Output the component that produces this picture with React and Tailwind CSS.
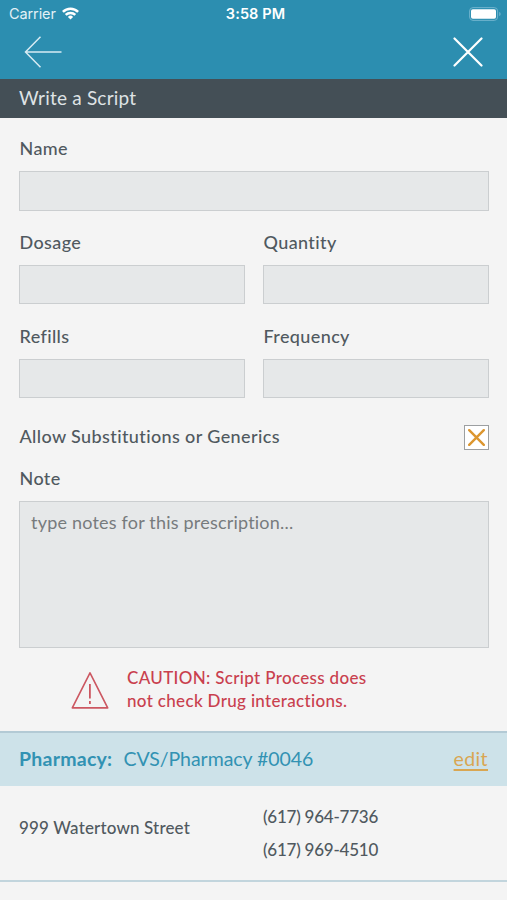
import React, { useState } from 'react';

const BackArrow = () => (
  <svg width="38" height="32" viewBox="0 0 38 32" fill="none" stroke="#d6ebf3" strokeWidth="1.5">
    <path d="M16.5 0.8L1.5 16l15 15.2M1.5 16H37.5" />
  </svg>
);

const CloseIcon = () => (
  <svg width="30" height="30" viewBox="0 0 30 30" fill="none" stroke="#fff" strokeWidth="2.2" strokeLinecap="round">
    <path d="M1.5 1.5l27 27M28.5 1.5l-27 27" />
  </svg>
);

const WifiIcon = () => (
  <svg width="17" height="13" viewBox="0 0 17 13" fill="none" stroke="#fff" strokeWidth="2.5">
    <path d="M0.9 4.9a10.7 10.7 0 0 1 15.2 0" />
    <path d="M3.7 7.9a6.8 6.8 0 0 1 9.6 0" />
    <path d="M8.5 12.6L5.9 9.9a3.7 3.7 0 0 1 5.2 0z" fill="#fff" stroke="none" />
  </svg>
);

const BatteryIcon = () => (
  <svg width="32" height="14" viewBox="0 0 32 14" fill="none">
    <rect x="0.6" y="0.6" width="28" height="12.8" rx="3.4" stroke="#6fb3cd" strokeWidth="1" />
    <rect x="2" y="2.2" width="25" height="9.6" rx="1.8" fill="#fff" />
    <path d="M30.2 5v4c1-.3 1.4-1 1.4-2s-.4-1.7-1.4-2z" fill="#6fb3cd" />
  </svg>
);

const WarningIcon = () => (
  <svg width="38" height="38" viewBox="0 0 38 38" fill="none" stroke="#cc5761" strokeWidth="1.6">
    <path d="M19 1.8L1.3 36.9h35.4z" strokeLinejoin="round" />
    <path d="M18.9 13v14.6M18.9 30v3" strokeWidth="1.8" />
  </svg>
);

const Field = ({ label, inputClass = 'h-[39px]' }) => (
  <label className="flex flex-1 flex-col">
    <span className="mb-[12px] h-[22px] pl-[0.5px] leading-[22px]">{label}</span>
    <input
      type="text"
      className={`${inputClass} w-full border border-[#cbced0] bg-[#e6e8e9] px-3 focus:outline-none`}
    />
  </label>
);

const App = () => {
  const [substitutions, setSubstitutions] = useState(true);

  return (
    <div className="flex h-[900px] w-[507px] flex-col overflow-hidden bg-[#f4f4f4] font-['Lato',sans-serif] text-[18px] font-medium tracking-[0.38px] text-[#50595f]">
      {/* Status bar and navigation */}
      <header className="h-[79px] bg-[#2c8eb0] text-white">
        <div className="grid h-[27px] grid-cols-3 items-center pl-[9px] pr-[6px] font-['Inter',sans-serif] text-[14.5px] font-normal tracking-[-0.1px]">
          <div className="flex items-center gap-[6px] text-[#e3f1f6]">
            <span>Carrier</span>
            <WifiIcon />
          </div>
          <span className="pl-px text-center font-semibold tracking-[0.1px]">3:58 PM</span>
          <div className="flex justify-end">
            <BatteryIcon />
          </div>
        </div>
        <div className="flex h-[50px] items-center justify-between px-[24px]">
          <button type="button" aria-label="Back">
            <BackArrow />
          </button>
          <button type="button" aria-label="Close">
            <CloseIcon />
          </button>
        </div>
      </header>

      <h1 className="h-[39px] bg-[#444f56] pl-[19px] text-[19px] font-normal leading-[38px] tracking-[0.2px] text-[#dfe3e5]">
        Write a Script
      </h1>

      {/* Prescription form */}
      <form className="flex h-[613px] flex-col pl-[19px] pr-[18px] pt-[19px]" onSubmit={(e) => e.preventDefault()}>
        <div className="flex h-[94px]">
          <Field label="Name" inputClass="h-[40px]" />
        </div>
        <div className="flex h-[94px] gap-[18px]">
          <Field label="Dosage" />
          <Field label="Quantity" />
        </div>
        <div className="flex h-[88px] gap-[18px]">
          <Field label="Refills" />
          <Field label="Frequency" />
        </div>

        <div className="flex h-[48px] items-center justify-between">
          <span className="pb-px pl-[0.5px]">Allow Substitutions or Generics</span>
          <button
            type="button"
            aria-label="Allow substitutions"
            onClick={() => setSubstitutions(!substitutions)}
            className="flex h-[25px] w-[25px] items-center justify-center border border-[#9c9fa1] bg-white"
          >
            {substitutions && (
              <svg width="17" height="17" viewBox="0 0 17 17" fill="none" stroke="#dc962f" strokeWidth="2.4" strokeLinecap="round">
                <path d="M1.2 1.2l14.6 14.6M15.8 1.2L1.2 15.8" />
              </svg>
            )}
          </button>
        </div>

        <label htmlFor="note" className="h-[40px] pl-[0.5px] pt-[6px] leading-[22px]">
          Note
        </label>
        <textarea
          id="note"
          placeholder="type notes for this prescription..."
          className="h-[147px] w-full resize-none border border-[#cbced0] bg-[#e6e8e9] px-[11px] py-[9px] font-normal leading-[22px] tracking-[0.2px] placeholder:text-[#777b7d] focus:outline-none"
        />

        <div className="flex items-start pl-[52px] pt-[18px] text-[#c9404e]">
          <div className="mt-[5px]">
            <WarningIcon />
          </div>
          <p className="ml-[18px] text-[17px] leading-[23px] tracking-[0.33px]">
            CAUTION: Script Process does
            <br />
            not check Drug interactions.
          </p>
        </div>
      </form>

      {/* Pharmacy */}
      <section>
        <div className="flex h-[55px] items-center border-t-2 border-[#b3cad5] bg-[#cde2e9] pb-px pl-[19px] pr-[19px] text-[19.5px] font-normal text-[#3292b3]">
          <span className="font-bold tracking-[0.25px]">Pharmacy:</span>
          <span className="ml-[11px] tracking-[-0.05px]">CVS/Pharmacy #0046</span>
          <a href="#" className="ml-auto text-[#d9a652] underline decoration-[1.5px] underline-offset-[3px]">edit</a>
        </div>
        <div className="flex h-[96px] items-center border-b-2 border-[#c2d5dd] px-[19px] text-[17px]">
          <span className="w-[244px] pb-[10px] tracking-[0.15px]">999 Watertown Street</span>
          <div className="flex flex-col gap-[11px] leading-[22px] tracking-[-0.24px]">
            <span>(617) 964-7736</span>
            <span>(617) 969-4510</span>
          </div>
        </div>
      </section>
    </div>
  );
};

export default App;
